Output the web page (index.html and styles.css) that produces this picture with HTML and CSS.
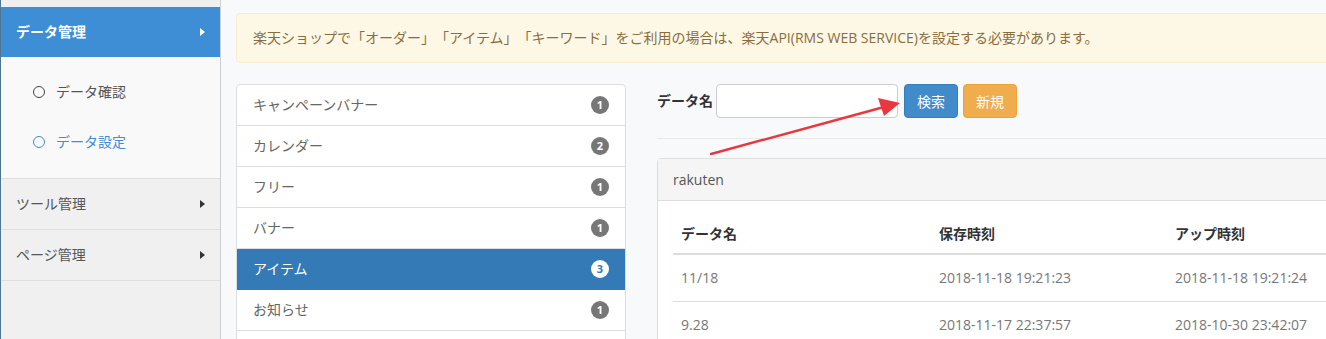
FILE: index.html
```html
<!DOCTYPE html>
<html lang="ja">
<head>
  <meta charset="UTF-8" />
  <meta name="viewport" content="width=device-width, initial-scale=1.0"/>
  <title>データ設定</title>
  <link rel="stylesheet" href="styles.css">
</head>
<body>
  <div class="layout">
    <aside class="sidebar">
      <div class="nav-head active">データ管理 <span class="caret"></span></div>
      <ul class="submenu">
        <li><span class="ring"></span>データ確認</li>
        <li class="current"><span class="ring"></span>データ設定</li>
      </ul>
      <div class="nav-head">ツール管理 <span class="caret"></span></div>
      <div class="nav-head">ページ管理 <span class="caret"></span></div>
    </aside>

    <main class="main">
      <div class="alert">楽天ショップで「オーダー」「アイテム」「キーワード」をご利用の場合は、楽天API(RMS WEB SERVICE)を設定する必要があります。</div>

      <div class="row">
        <ul class="list-group">
          <li>キャンペーンバナー <span class="badge">1</span></li>
          <li>カレンダー <span class="badge">2</span></li>
          <li>フリー <span class="badge">1</span></li>
          <li>バナー <span class="badge">1</span></li>
          <li class="active">アイテム <span class="badge">3</span></li>
          <li>お知らせ <span class="badge">1</span></li>
        </ul>

        <section class="content">
          <form class="search" onsubmit="return false;">
            <label for="dataName">データ名</label>
            <input type="text" id="dataName" />
            <button class="btn btn-primary">検索</button>
            <button class="btn btn-warning" type="button">新規</button>
          </form>
          <hr />
          <div class="panel">
            <div class="panel-heading">rakuten</div>
            <div class="panel-body">
              <table>
                <thead>
                  <tr><th class="c1">データ名</th><th class="c2">保存時刻</th><th>アップ時刻</th></tr>
                </thead>
                <tbody>
                  <tr><td>11/18</td><td>2018-11-18 19:21:23</td><td>2018-11-18 19:21:24</td></tr>
                  <tr><td>9.28</td><td>2018-11-17 22:37:57</td><td>2018-10-30 23:42:07</td></tr>
                </tbody>
              </table>
            </div>
          </div>

          <!-- red arrow pointing at the search button -->
          <svg class="pointer" width="200" height="70" viewBox="0 0 200 70">
            <line x1="3" y1="67" x2="176" y2="20" stroke="#e8383d" stroke-width="2.4" stroke-linecap="round" />
            <polygon points="192,16 170,11 176,29" fill="#e8383d" />
          </svg>
        </section>
      </div>
    </main>
  </div>
</body>
</html>
```

FILE: styles.css
```css
body {
  margin: 0;
  font-family: "Open Sans", "Noto Sans CJK JP", sans-serif;
  font-size: 14px;
  line-height: 20px;
  color: #333;
  background: #f8f9fa;
  overflow: hidden;
  text-spacing-trim: space-all;
}
ul {
  list-style: none;
  margin: 0;
  padding: 0;
}
.layout {
  display: flex;
  width: 1440px;
  min-height: 339px;
}

/* sidebar */
.sidebar {
  width: 219px;
  flex-shrink: 0;
  padding-top: 7px;
  background: #f0f0f0;
  border-left: 1px solid #4f7590;
  border-right: 1px solid #cfcfcf;
}
.nav-head {
  display: flex;
  align-items: center;
  justify-content: space-between;
  height: 50px;
  padding: 0 15px 0 15px;
  color: #555;
  border-bottom: 1px solid #dedede;
}
.nav-head.active {
  background: #3d8ed5;
  color: #fff;
  font-weight: bold;
  border-bottom: none;
}
.caret {
  width: 0;
  height: 0;
  border-top: 4px solid transparent;
  border-bottom: 4px solid transparent;
  border-left: 5px solid #333;
}
.nav-head.active .caret {
  border-left-color: #fff;
}
.submenu {
  background: #f9f9f9;
  padding: 10px 0 11px;
  border-bottom: 1px solid #dedede;
}
.submenu li {
  display: flex;
  align-items: center;
  height: 50px;
  padding-left: 32px;
  color: #555;
}
.submenu li.current {
  color: #3d8ed5;
}
.ring {
  width: 10px;
  height: 10px;
  border: 1.5px solid currentColor;
  border-radius: 50%;
  margin-right: 11px;
}
.submenu li:not(.current) .ring {
  border-color: #444;
}

/* main */
.main {
  flex: 1;
  padding: 13px 15px 0;
}
.alert {
  height: 48px;
  display: flex;
  align-items: center;
  padding: 0 16px;
  background: #fdf8e6;
  border: 1px solid #f7ecd0;
  border-radius: 4px;
  color: #8a6d3b;
}
.row {
  display: flex;
  gap: 31px;
  margin-top: 21px;
}

/* list runs on past the bottom of the window */
.list-group {
  box-sizing: border-box;
  width: 390px;
  flex-shrink: 0;
  align-self: flex-start;
  padding-bottom: 40px;
  background: #fff;
  border: 1px solid #ddd;
  border-radius: 4px;
}
.list-group li {
  display: flex;
  align-items: center;
  justify-content: space-between;
  height: 40px;
  padding: 0 16px;
  color: #666;
  border-bottom: 1px solid #ddd;
}
.list-group li.active {
  background: #337ab7;
  color: #fff;
  border-color: #337ab7;
}
.badge {
  width: 18px;
  height: 18px;
  border-radius: 50%;
  background: #777;
  color: #fff;
  font-family: "Open Sans", sans-serif;
  font-size: 11px;
  font-weight: bold;
  display: flex;
  align-items: center;
  justify-content: center;
}
.list-group li.active .badge {
  background: #fff;
  color: #337ab7;
}

.content {
  flex: 1;
  position: relative;
}
.search {
  display: flex;
  align-items: center;
  height: 34px;
}
.search label {
  font-weight: bold;
  margin-right: 3px;
}
.search input {
  width: 182px;
  height: 34px;
  box-sizing: border-box;
  border: 1px solid #ccc;
  border-radius: 4px;
  background: #fff;
  margin-right: 6px;
}
.btn {
  height: 34px;
  padding: 0 12px;
  border: 1px solid transparent;
  border-radius: 4px;
  color: #fff;
  font-family: inherit;
  font-size: 14px;
  margin-right: 5px;
}
.btn-primary {
  background: #428bca;
  border-color: #357ebd;
}
.btn-warning {
  background: #f0ad4e;
  border-color: #eea236;
}
hr {
  border: 0;
  border-top: 1px solid #eaeaea;
  margin: 20px 0 19px;
}

.panel {
  background: #fff;
  border: 1px solid #ddd;
  border-radius: 4px;
}
.panel-heading {
  height: 41px;
  display: flex;
  align-items: center;
  padding: 0 15px;
  background: #f5f5f5;
  border-bottom: 1px solid #ddd;
  color: #555;
}
.panel-body {
  padding: 15px;
}
table {
  width: 100%;
  border-collapse: collapse;
}
th {
  text-align: left;
  padding: 8px 8px 9px;
  border-bottom: 2px solid #ddd;
}
th.c1 { width: 242px; }
th.c2 { width: 220px; }
td {
  padding: 13px 8px;
  color: #777;
  border-bottom: 1px solid #ddd;
}

.pointer {
  position: absolute;
  left: 51px;
  top: 3px;
  pointer-events: none;
}
```
